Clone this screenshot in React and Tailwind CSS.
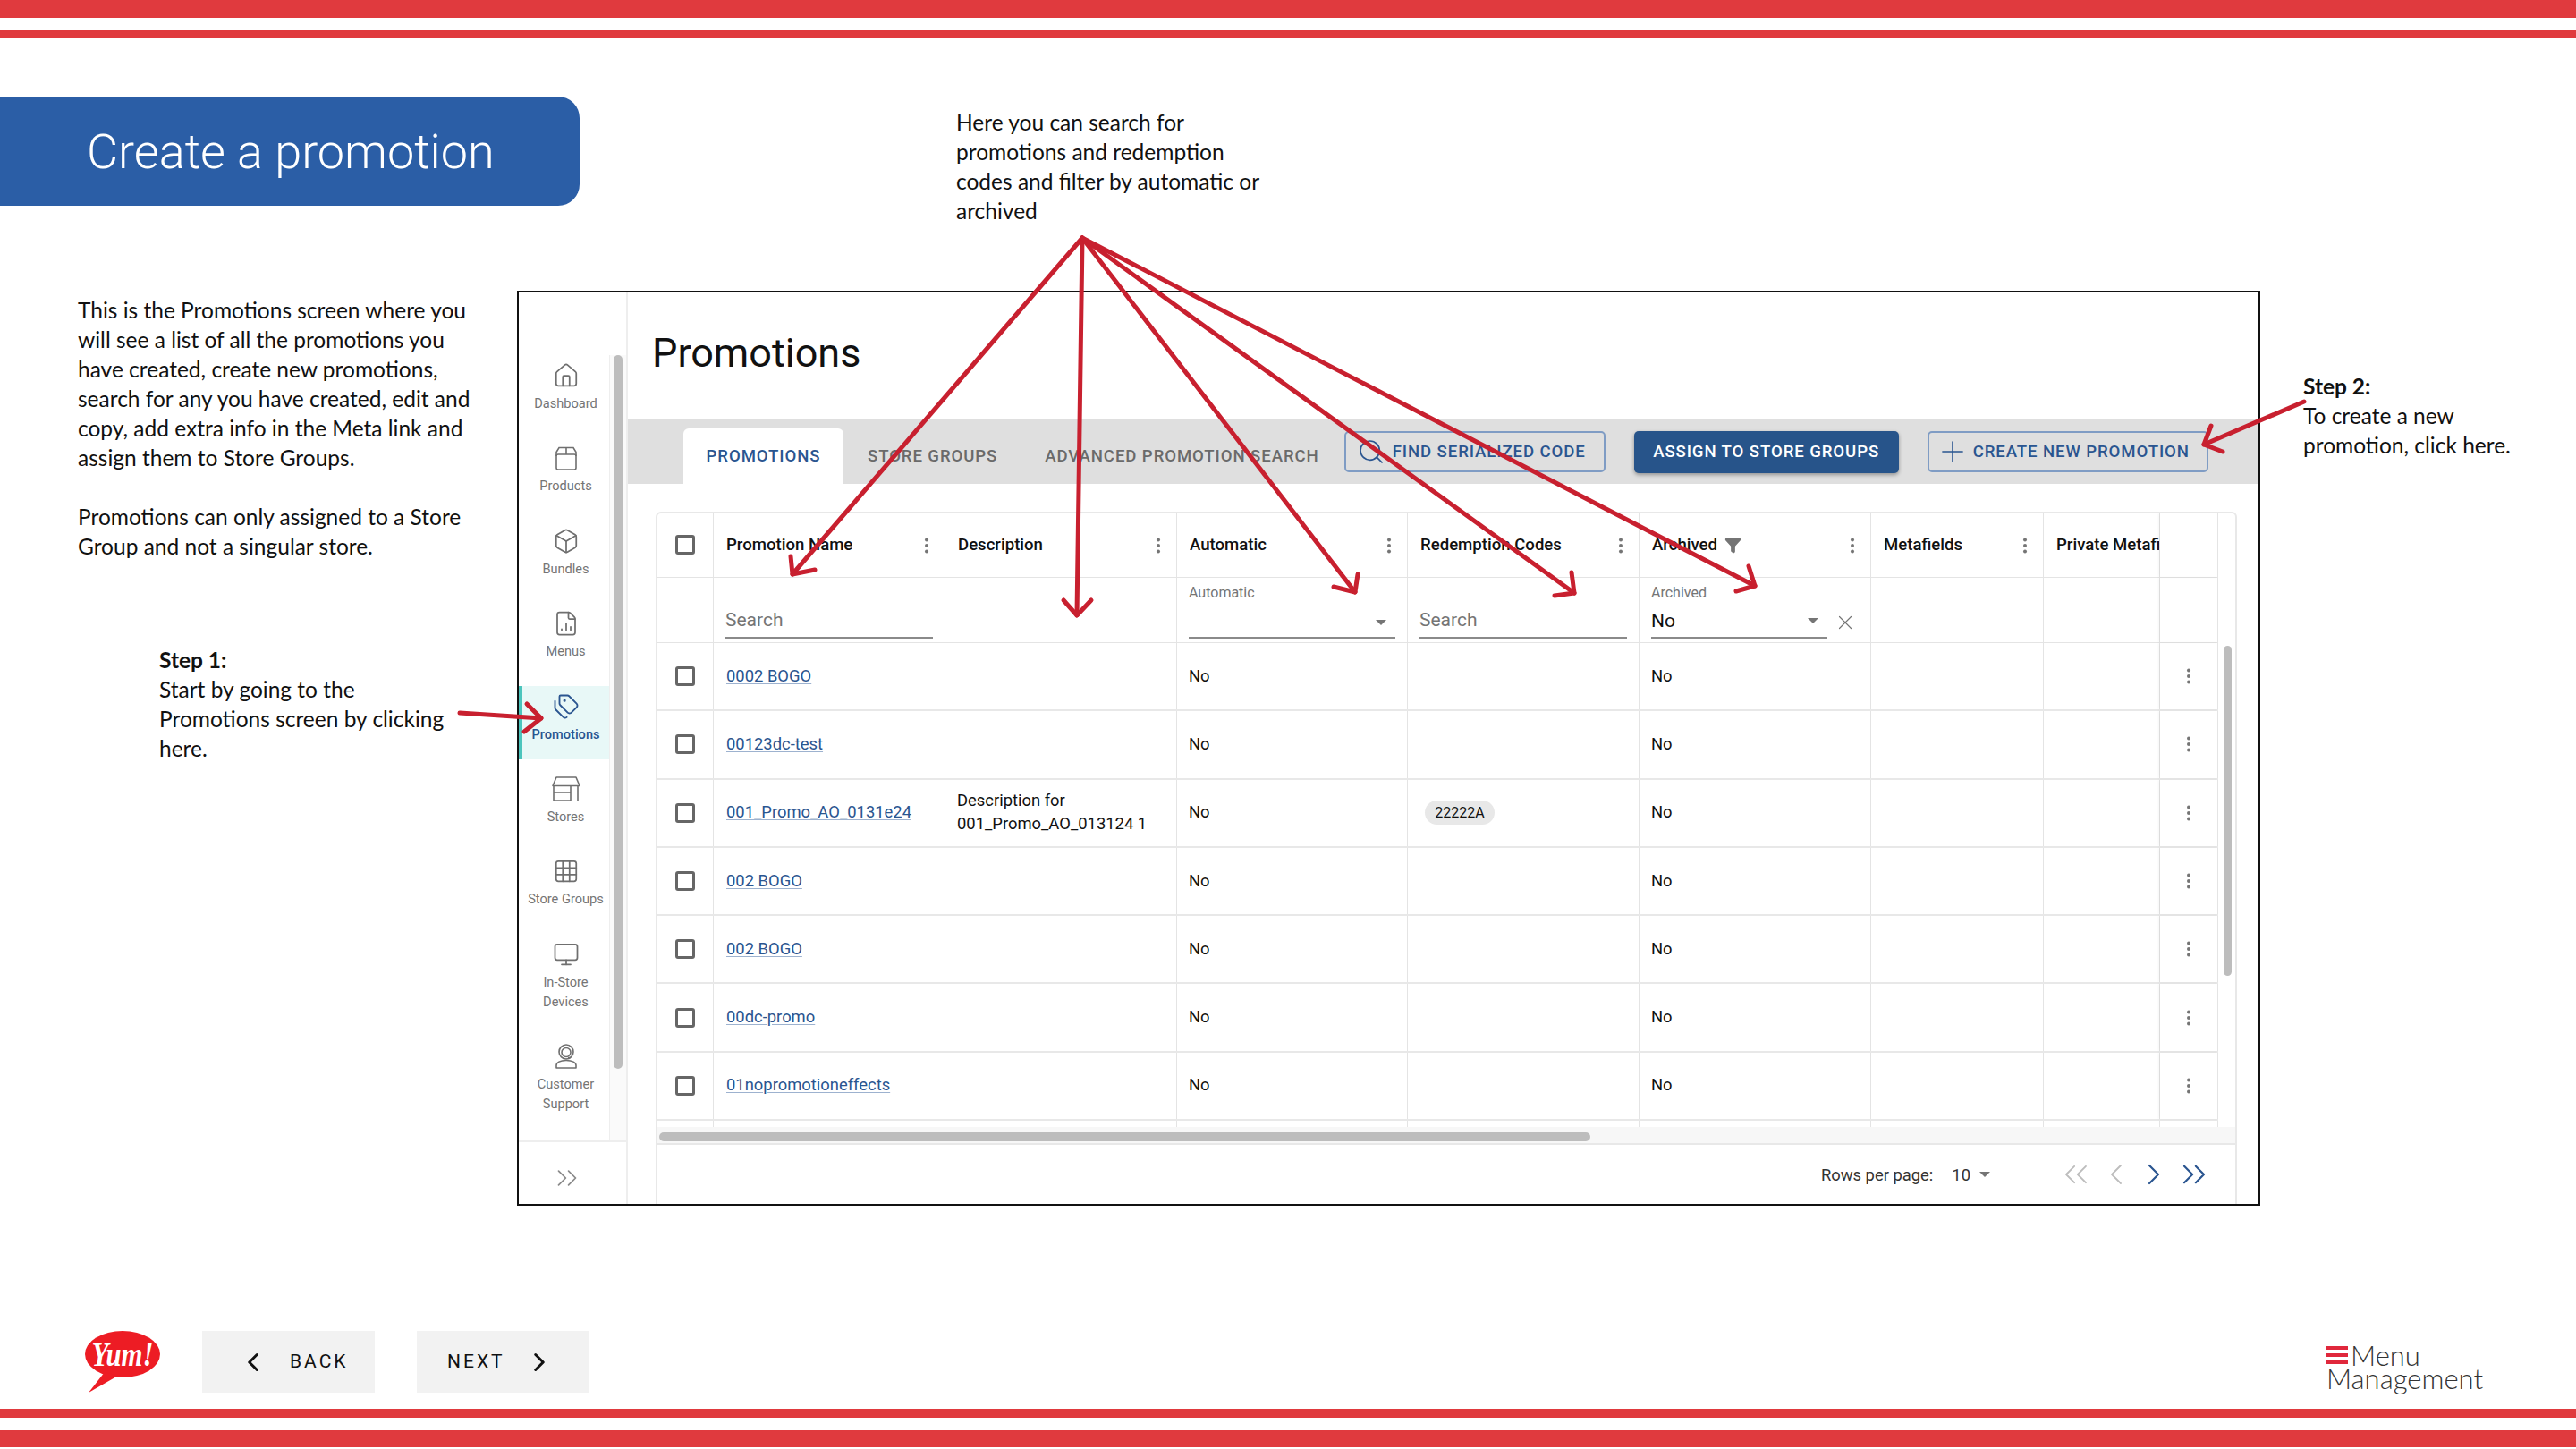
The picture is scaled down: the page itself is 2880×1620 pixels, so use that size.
import React from 'react';
import { House, Box, FileChartColumn, Tags, Grid3x3, Monitor, ChevronLeft, ChevronRight, ChevronsLeft, ChevronsRight, Search, Plus, X, Filter } from 'lucide-react';

const COLS = 'grid grid-cols-[63px_259px_259px_258px_259px_259px_193px_130px_65px]';
const CELL = 'border-r border-[#e4e4e4] flex items-center min-w-0';

function ProductsIcon() {
  return (
    <svg width="30" height="27" viewBox="0 0 30 27" fill="none" stroke="#6f6f6f" strokeWidth="1.6">
      <path d="M4 11V6.5L7 1.5H23L26 6.5V11" />
      <rect x="4" y="9" width="22" height="17" rx="2" />
      <path d="M15 1.5V9" />
    </svg>
  );
}

function StoreIcon() {
  return (
    <svg width="34" height="28" viewBox="0 0 34 28" fill="none" stroke="#6f6f6f" strokeWidth="1.6">
      <path d="M6 1H28L32 10.5H2Z" strokeLinejoin="round" />
      <path d="M3 10.5V27H22V10.5M3 18H22M30 10.5V27" />
    </svg>
  );
}

function SupportIcon() {
  return (
    <svg width="30" height="28" viewBox="0 0 30 28" fill="none" stroke="#6f6f6f" strokeWidth="1.6">
      <circle cx="15" cy="9" r="8" />
      <circle cx="15" cy="9.5" r="5" />
      <path d="M17 15.5H20" />
      <path d="M4 27V24C4 21 8 18.5 15 18.5C22 18.5 26 21 26 24V27Z" strokeLinejoin="round" />
    </svg>
  );
}

const navItems = [
  { label: ['Dashboard'], icon: <House size={30} strokeWidth={1.4} color="#6f6f6f" /> },
  { label: ['Products'], icon: <ProductsIcon /> },
  { label: ['Bundles'], icon: <Box size={30} strokeWidth={1.4} color="#6f6f6f" /> },
  { label: ['Menus'], icon: <FileChartColumn size={30} strokeWidth={1.4} color="#6f6f6f" /> },
  { label: ['Promotions'], active: true, icon: <Tags size={30} strokeWidth={1.5} color="#2a5590" /> },
  { label: ['Stores'], icon: <StoreIcon /> },
  { label: ['Store Groups'], icon: <Grid3x3 size={30} strokeWidth={1.4} color="#6f6f6f" /> },
  { label: ['In-Store', 'Devices'], icon: <Monitor size={30} strokeWidth={1.4} color="#6f6f6f" /> },
  { label: ['Customer', 'Support'], icon: <SupportIcon /> },
];

const rows = [
  { name: '0002 BOGO' },
  { name: '00123dc-test' },
  { name: '001_Promo_AO_0131e24', desc: 'Description for 001_Promo_AO_013124 1', code: '22222A' },
  { name: '002 BOGO' },
  { name: '002 BOGO' },
  { name: '00dc-promo' },
  { name: '01nopromotioneffects' },
];

function Dots() {
  return (
    <svg width="6" height="18" viewBox="0 0 6 18" fill="#757575" className="shrink-0">
      <circle cx="3" cy="2.5" r="2" />
      <circle cx="3" cy="9" r="2" />
      <circle cx="3" cy="15.5" r="2" />
    </svg>
  );
}

function Check() {
  return <div className="w-[22px] h-[22px] border-[3px] border-[#666] rounded-[3px]" />;
}

function Caret() {
  return <div className="w-0 h-0 border-x-[6px] border-x-transparent border-t-[6px] border-t-[#757575]" />;
}

function HeadCell({ title, filtered }) {
  return (
    <div className={`${CELL} pl-[14px] pr-[17px] justify-between`}>
      <div className="flex items-center gap-[8px] text-[18.6px] font-medium text-[#111] whitespace-nowrap overflow-hidden">
        {title}
        {filtered && <Filter size={19} fill="#757575" color="#757575" />}
      </div>
      <Dots />
    </div>
  );
}

function SearchCell() {
  return (
    <div className={`${CELL} px-[13px] items-end pb-[4px]`}>
      <div className="w-full h-[34px] border-b-2 border-[#8a8a8a] text-[21px] leading-[26px] text-[#757575]">Search</div>
    </div>
  );
}

function Sidebar() {
  return (
    <div className="w-[122px] shrink-0 border-r-2 border-[#eeeeee] flex flex-col">
      <div className="mt-[70px] h-[880px] flex border-b-2 border-[#eeeeee]">
        <div className="w-[102px] border-r border-[#eeeeee] flex flex-col gap-[10.4px] overflow-hidden">
          {navItems.map((item) => (
            <div
              key={item.label[0]}
              className={`shrink-0 flex flex-col items-center pt-[9px] border-l-4 ${item.label.length > 1 ? 'h-[104px]' : 'h-[82px]'} ${item.active ? 'bg-[#e8f8f7] border-[#4cc5bd]' : 'border-transparent'}`}
            >
              <div className="h-[28px] flex items-center">{item.icon}</div>
              <div className={`mt-[6px] text-[14.6px] leading-[22px] text-center whitespace-nowrap ${item.active ? 'font-medium text-[#2a5590]' : 'text-[#757575]'}`}>
                {item.label.map((l) => <div key={l}>{l}</div>)}
              </div>
            </div>
          ))}
        </div>
        <div className="flex-1 bg-[#fafafa] pl-[4px]">
          <div className="w-[10px] h-[798px] rounded-full bg-[#bdbdbd]" />
        </div>
      </div>
      <div className="flex-1 w-[102px] flex items-center justify-center pl-[6px] pt-[11px]">
        <ChevronsRight size={38} strokeWidth={1.1} color="#8a8a8a" />
      </div>
    </div>
  );
}

function PromotionsTable() {
  return (
    <div className="ml-[31px] mr-[24px] mt-[31px] flex-1 border-2 border-b-0 border-[#e8e8e8] rounded-t-[6px] flex flex-col overflow-hidden text-[#111]">
      <div className="flex h-[686px] overflow-hidden">
        <div className="w-[1745px] shrink-0">
          <div className={`${COLS} h-[72px] border-b border-[#e4e4e4]`}>
            <div className={`${CELL} justify-center pb-[2px]`}><Check /></div>
            <HeadCell title="Promotion Name" />
            <HeadCell title="Description" />
            <HeadCell title="Automatic" />
            <HeadCell title="Redemption Codes" />
            <HeadCell title="Archived" filtered />
            <HeadCell title="Metafields" />
            <div className={`${CELL} pl-[14px] text-[18.6px] font-medium whitespace-nowrap overflow-hidden`}>Private Metafields</div>
            <div className={`${CELL} shadow-[-2px_0_3px_rgba(0,0,0,0.04)]`} />
          </div>
          <div className={`${COLS} h-[73px] border-b border-[#e4e4e4]`}>
            <div className={CELL} />
            <SearchCell />
            <div className={CELL} />
            <div className={`${CELL} px-[13px] items-end pb-[4px]`}>
              <div className="w-full">
                <div className="text-[16px] leading-[20px] text-[#757575] mb-[7px]">Automatic</div>
                <div className="h-[34px] border-b-2 border-[#8a8a8a] flex justify-end items-center pr-[10px]"><Caret /></div>
              </div>
            </div>
            <SearchCell />
            <div className={`${CELL} pl-[13px] items-end pb-[4px] gap-[7px]`}>
              <div className="w-[197px] shrink-0">
                <div className="text-[16px] leading-[20px] text-[#757575] mb-[7px]">Archived</div>
                <div className="h-[34px] border-b-2 border-[#8a8a8a] flex justify-between items-center pr-[10px] pb-[5px] text-[21px] leading-[26px]">No<Caret /></div>
              </div>
              <X size={26} strokeWidth={1.1} color="#757575" className="mb-[5px] shrink-0" />
            </div>
            <div className={CELL} />
            <div className={CELL} />
            <div className={`${CELL} shadow-[-2px_0_3px_rgba(0,0,0,0.04)]`} />
          </div>
          {rows.map((row, i) => (
            <div key={i} className={`${COLS} h-[76.3px] border-b-2 border-[#e8e8e8] text-[18.4px]`}>
              <div className={`${CELL} justify-center`}><Check /></div>
              <div className={`${CELL} pl-[14px] pb-[2px]`}>
                <span className="text-[#2a5590] underline decoration-[#9db2cf] underline-offset-2">{row.name}</span>
              </div>
              <div className={`${CELL} pl-[13px] pr-[6px] pb-[1px] leading-[26px]`}>{row.desc}</div>
              <div className={`${CELL} pl-[13px] pb-[2px]`}>No</div>
              <div className={`${CELL} pl-[19px]`}>
                {row.code && <span className="h-[27px] w-[78px] rounded-full bg-[#e8e8e8] text-[16px] flex items-center justify-center">{row.code}</span>}
              </div>
              <div className={`${CELL} pl-[13px] pb-[2px]`}>No</div>
              <div className={CELL} />
              <div className={CELL} />
              <div className={`${CELL} justify-center shadow-[-2px_0_3px_rgba(0,0,0,0.04)]`}><Dots /></div>
            </div>
          ))}
          <div className={`${COLS} h-[10px]`}>
            {[0, 1, 2, 3, 4, 5, 6, 7, 8].map((c) => <div key={c} className={CELL} />)}
          </div>
        </div>
        <div className="flex-1 pl-[6px] pt-[148px]">
          <div className="w-[9px] h-[369px] rounded-full bg-[#bdbdbd]" />
        </div>
      </div>
      <div className="h-[20px] bg-[#f7f7f7] border-b-2 border-[#e8e8e8] pl-[2px] pt-[6px]">
        <div className="w-[1041px] h-[10px] rounded-full bg-[#bdbdbd]" />
      </div>
      <div className="flex-1 flex items-center justify-end pr-[24px] text-[18.4px] text-[#333]">
        <span>Rows per page:</span>
        <span className="ml-[21px] mr-[10px]">10</span>
        <Caret />
        <ChevronsLeft size={44} strokeWidth={1} color="#bdbdbd" className="ml-[74px]" />
        <ChevronLeft size={40} strokeWidth={1.1} color="#bdbdbd" className="ml-[3px]" />
        <ChevronRight size={40} strokeWidth={1.3} color="#2a5590" className="ml-[2px]" />
        <ChevronsRight size={44} strokeWidth={1.2} color="#2a5590" className="ml-[3px]" />
      </div>
    </div>
  );
}

function AppFrame() {
  return (
    <div className="w-[1949px] h-[1023px] shrink-0 border-2 border-[#111] flex bg-white font-['Roboto',sans-serif]">
      <Sidebar />
      <div className="flex-1 flex flex-col min-w-0">
        <div className="h-[142px] pl-[27px] pt-[38px] text-[45px] leading-[60px] text-[#111]">Promotions</div>
        <div className="h-[72px] bg-[#dfdfdf] flex items-start pl-[62px] text-[18.6px] font-medium tracking-[0.9px] whitespace-nowrap">
          <div className="mt-[10px] h-[62px] w-[179px] bg-white rounded-t-[6px] flex items-center justify-center text-[#2a5590]">PROMOTIONS</div>
          <div className="mt-[10px] h-[62px] flex items-center ml-[27px] text-[#6a6a6a]">STORE GROUPS</div>
          <div className="mt-[10px] h-[62px] flex items-center ml-[53px] text-[#6a6a6a]">ADVANCED PROMOTION SEARCH</div>
          <div className="mt-[13px] ml-[28px] w-[292px] h-[46px] border-2 border-[#7f9cc4] rounded-[5px] flex items-center pl-[12px] gap-[8px] text-[#2a5590]">
            <Search size={32} strokeWidth={1.3} className="shrink-0" />FIND SERIALIZED CODE
          </div>
          <div className="mt-[13px] ml-[32px] w-[296px] h-[47px] bg-[#27548a] rounded-[5px] shadow-[0_2px_4px_rgba(0,0,0,0.35)] flex items-center justify-center text-white">
            ASSIGN TO STORE GROUPS
          </div>
          <div className="mt-[13px] ml-[32px] w-[314px] h-[46px] border-2 border-[#7f9cc4] rounded-[5px] flex items-center pl-[7px] gap-[4px] text-[#2a5590]">
            <Plus size={38} strokeWidth={1} className="shrink-0" />CREATE NEW PROMOTION
          </div>
        </div>
        <PromotionsTable />
      </div>
    </div>
  );
}

function YumLogo() {
  return (
    <svg width="84" height="69" viewBox="0 0 84 69" className="shrink-0">
      <ellipse cx="42" cy="26" rx="42" ry="26" fill="#ed1c24" />
      <path d="M22 46L4 69L37 50Z" fill="#ed1c24" />
      <text x="42" y="39" textAnchor="middle" fontFamily="Liberation Serif" fontWeight="700" fontStyle="italic" fontSize="38" fill="#fff" textLength="69" lengthAdjust="spacingAndGlyphs">Yum!</text>
    </svg>
  );
}

function MenuLogo() {
  return (
    <div className="ml-auto mr-[106px] mt-[14px] w-[173px] font-['Lato',sans-serif] font-light text-[31px] leading-[26px] text-[#333] whitespace-nowrap">
      <div className="flex items-center">
        <div className="w-[24px] mr-[3px] flex flex-col gap-[4px]">
          <div className="h-[4px] bg-[#e0283c]" />
          <div className="h-[4px] bg-[#e0283c]" />
          <div className="h-[4px] bg-[#e0283c]" />
        </div>
        Menu
      </div>
      <div>Management</div>
    </div>
  );
}

function Arrow({ from, tip, a, b }) {
  return (
    <>
      <line x1={from[0]} y1={from[1]} x2={tip[0]} y2={tip[1]} />
      <polyline points={`${a[0]},${a[1]} ${tip[0]},${tip[1]} ${b[0]},${b[1]}`} />
    </>
  );
}

function Arrows() {
  const src = [1210, 266];
  return (
    <svg className="absolute inset-0 pointer-events-none" width="2880" height="1620" fill="none" stroke="#c8202f" strokeWidth="5" strokeLinecap="round" strokeLinejoin="round">
      <Arrow from={src} tip={[886, 642]} a={[884, 622]} b={[911, 637]} />
      <Arrow from={src} tip={[1204, 688]} a={[1189, 671]} b={[1220, 671]} />
      <Arrow from={src} tip={[1515, 662]} a={[1518, 642]} b={[1491, 656]} />
      <Arrow from={src} tip={[1760, 663]} a={[1757, 640]} b={[1738, 666]} />
      <Arrow from={src} tip={[1962, 655]} a={[1955, 633]} b={[1941, 661]} />
      <Arrow from={[2576, 449]} tip={[2464, 497]} a={[2472, 476]} b={[2485, 505]} />
      <Arrow from={[514, 797]} tip={[605, 803]} a={[589, 787]} b={[586, 818]} />
    </svg>
  );
}

export default function App() {
  return (
    <div className="relative w-[2880px] h-[1620px] overflow-hidden bg-white flex flex-col font-['Lato',sans-serif] text-[24.5px] leading-[33px] text-[#111]">
      {/* Top stripes */}
      <div className="h-[20px] bg-[#e03a3e]" />
      <div className="h-[10px] mt-[13px] bg-[#e03a3e]" />

      {/* Title and search note */}
      <div className="h-[282px] flex items-start">
        <div className="mt-[65px] w-[648px] h-[122px] bg-[#2b5ea6] rounded-r-[24px] flex items-center pl-[97px] font-['Roboto',sans-serif] font-light text-[54px] text-white whitespace-nowrap">
          Create a promotion
        </div>
        <div className="mt-[77px] ml-[421px] whitespace-nowrap">
          Here you can search for<br />
          promotions and redemption<br />
          codes and filter by automatic or<br />
          archived
        </div>
      </div>

      {/* Main row */}
      <div className="flex items-start">
        <div className="w-[578px] shrink-0 pl-[87px] pt-[5px] whitespace-nowrap">
          <p>
            This is the Promotions screen where you<br />
            will see a list of all the promotions you<br />
            have created, create new promotions,<br />
            search for any you have created, edit and<br />
            copy, add extra info in the Meta link and<br />
            assign them to Store Groups.
          </p>
          <p className="mt-[33px]">
            Promotions can only assigned to a Store<br />
            Group and not a singular store.
          </p>
          <p className="mt-[94px] ml-[91px]">
            <b>Step 1:</b><br />
            Start by going to the<br />
            Promotions screen by clicking<br />
            here.
          </p>
        </div>
        <AppFrame />
        <div className="pl-[48px] pt-[90px] whitespace-nowrap">
          <b>Step 2:</b><br />
          To create a new<br />
          promotion, click here.
        </div>
      </div>

      {/* Footer */}
      <div className="h-[227px] flex items-start pt-[140px] pl-[95px]">
        <YumLogo />
        <div className="ml-[47px] w-[193px] h-[69px] bg-[#f2f2f2] flex items-center pl-[40px] font-['Roboto',sans-serif] text-[21px] tracking-[3px]">
          <ChevronLeft size={34} strokeWidth={2.1} className="mr-[24px]" />BACK
        </div>
        <div className="ml-[47px] w-[192px] h-[69px] bg-[#f2f2f2] flex items-center pl-[34px] font-['Roboto',sans-serif] text-[21px] tracking-[3px]">
          NEXT<ChevronRight size={34} strokeWidth={2.1} className="ml-[21px]" />
        </div>
        <MenuLogo />
      </div>

      {/* Bottom stripes */}
      <div className="h-[10px] bg-[#e03a3e]" />
      <div className="h-[19px] mt-[14px] bg-[#e03a3e]" />

      <Arrows />
    </div>
  );
}
